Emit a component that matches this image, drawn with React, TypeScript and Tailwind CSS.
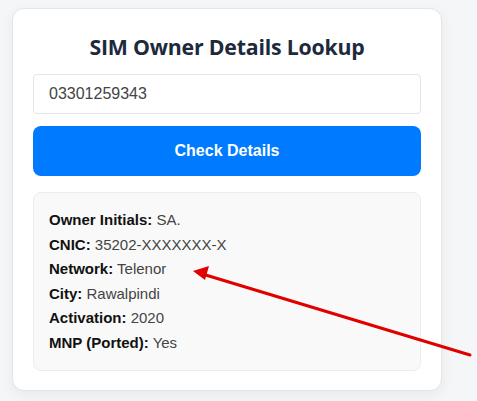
// App.tsx — SIM owner lookup card with result panel and annotation arrow

const DETAILS: [string, string][] = [
  ["Owner Initials:", "SA."],
  ["CNIC:", "35202-XXXXXXX-X"],
  ["Network:", "Telenor"],
  ["City:", "Rawalpindi"],
  ["Activation:", "2020"],
  ["MNP (Ported):", "Yes"],
];

export default function App() {
  return (
    <div className="relative w-[477px] h-[401px] overflow-hidden bg-[#f5f6f8] pt-[8px] pl-[12px] font-['Liberation_Sans',Arial,sans-serif]">
      <div className="w-[430px] h-[383px] rounded-[12px] border border-[#e3e5e8] bg-white px-[20px] pt-[24px] shadow-[0_4px_14px_rgba(0,0,0,0.06)]">
        <h2 className="text-center text-[21.3px] leading-[28px] font-bold text-[#1c2a3c] font-['Open_Sans','Noto_Sans',sans-serif] tracking-[-0.2px]">
          SIM Owner Details Lookup
        </h2>
        <div className="mt-[13px] h-[40px] rounded-[4px] border border-[#e2e4e7] px-[15px] flex items-center text-[16px] text-[#444]">
          03301259343
        </div>
        <button className="mt-[12px] w-full h-[50px] rounded-[8px] bg-[#007bff] text-white text-[16px] font-bold">
          Check Details
        </button>
        <div className="mt-[16px] h-[179px] rounded-[8px] border border-[#ececec] bg-[#f9f9f9] px-[15px] pt-[15px]">
          {DETAILS.map(([label, value]) => (
            <div key={label} className="text-[15px] leading-[24.6px] text-[#444]">
              <span className="font-bold text-[#111]">{label}</span> {value}
            </div>
          ))}
        </div>
      </div>
      <svg className="absolute left-0 top-0" width="477" height="401" viewBox="0 0 477 401">
        <line x1="470" y1="355" x2="204" y2="274.5" stroke="#e00000" strokeWidth="3" strokeLinecap="round" />
        <polygon points="193,271 209,266 205,280" fill="#e00000" />
      </svg>
    </div>
  );
}
